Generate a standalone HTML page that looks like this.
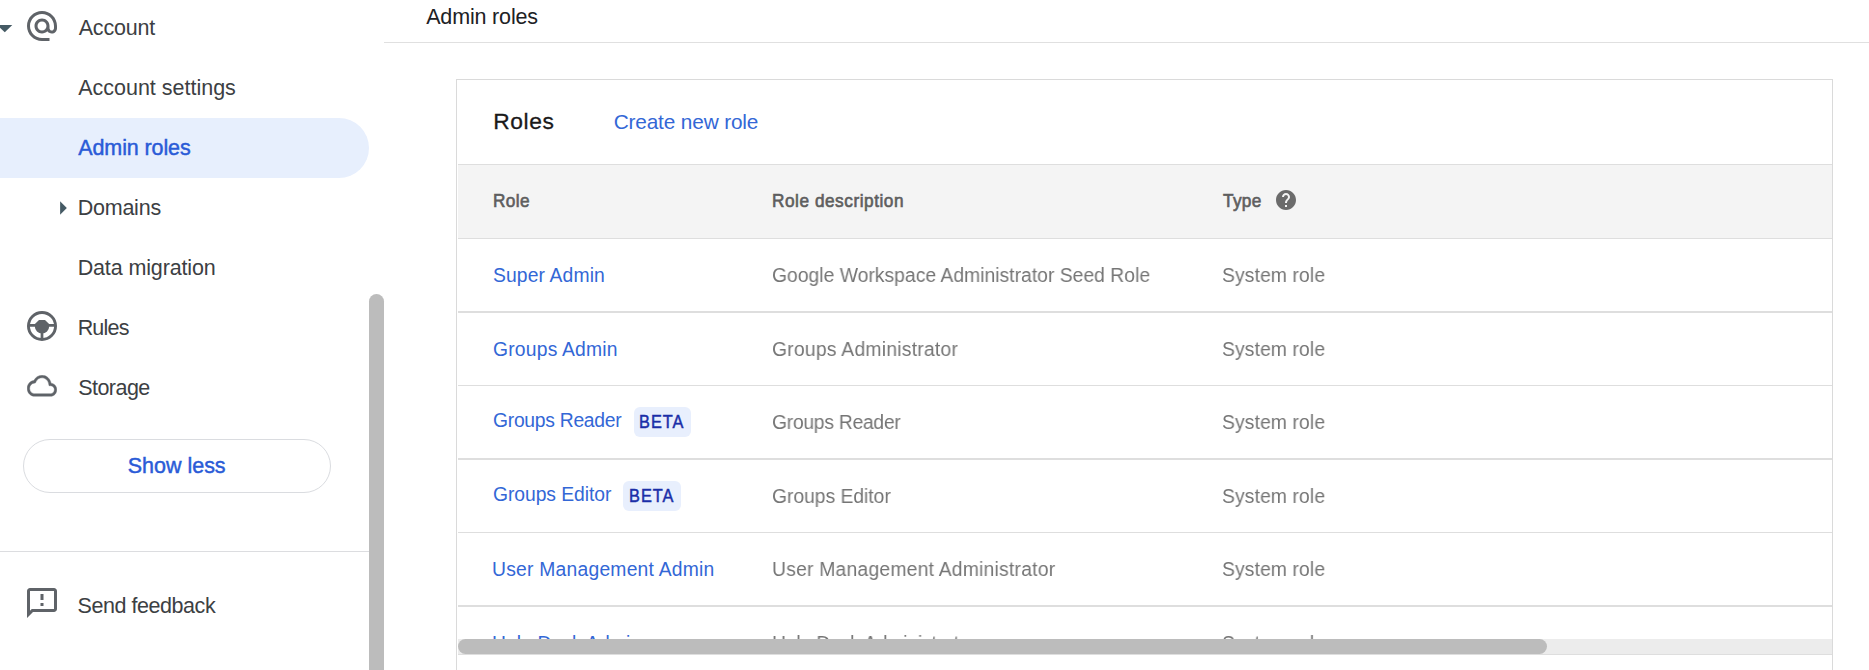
<!DOCTYPE html>
<html>
<head>
<meta charset="utf-8">
<title>Admin roles</title>
<style>
html,body{margin:0;padding:0;}
body{width:1869px;height:670px;overflow:hidden;background:#fff;position:relative;
  font-family:"Liberation Sans",sans-serif;color:#3c4043;}
.abs{position:absolute;}
.t{position:absolute;white-space:nowrap;line-height:1;transform-origin:0 50%;}
.nav{font-size:21.5px;color:#3c4043;}
.navact{font-size:21.5px;color:#2a5bd7;-webkit-text-stroke:0.45px #2a5bd7;}
.title{font-size:21.5px;color:#202124;}
.h2{font-size:22.8px;color:#1a1a1a;-webkit-text-stroke:0.3px #1a1a1a;}
.lnk{font-size:20.8px;color:#3367d6;}
.th{font-size:18.5px;color:#5e5e5e;-webkit-text-stroke:0.65px #5e5e5e;}
.td{font-size:20.0px;color:#757575;will-change:transform;}
.tdl{font-size:20.0px;color:#3367d6;}
.betat{font-size:18.5px;color:#1a2ea8;-webkit-text-stroke:0.5px #1a2ea8;}
.hl{left:0;top:118px;width:369px;height:60px;background:#e7effd;border-radius:0 30px 30px 0;}
.btn{left:23px;top:439px;width:306px;height:52px;border:1px solid #dadce0;border-radius:27px;}
.sdiv{left:0;top:551px;width:369px;height:1px;background:#dcdde0;}
.vsb{left:369px;top:294px;width:15px;height:400px;background:#bcbcbc;border-radius:7.5px 7.5px 0 0;}
.hdiv{left:384px;top:42px;width:1485px;height:1px;background:#e0e0e0;}
.card{left:456px;top:79px;width:1375px;height:700px;border:1px solid #dadada;box-sizing:content-box;}
.thbg{left:458px;top:165px;width:1374px;height:73px;background:#f4f4f4;}
.line{left:458px;width:1374px;background:#dedede;}
.beta{position:absolute;height:30px;background:#e8effd;border-radius:6px;}
.hsbt{left:458px;top:639px;width:1374px;height:15px;background:#ececec;border-bottom:1px solid #dedede;}
.hsb{left:458px;top:639px;width:1089px;height:15px;background:#bcbcbc;border-radius:7.5px;}
</style>
</head>
<body>

<!-- sidebar -->
<div class="abs hl"></div>

<svg class="abs" style="left:0;top:20px" width="16" height="16" viewBox="0 0 16 16"><path d="M-2.700 5.100 L12.300 5.100 L4.800 12.300 Z" fill="#455a64"/></svg>
<svg class="abs" style="left:24px;top:8px" width="36" height="36" viewBox="0 0 24 24"><path fill="#5f6368" d="M12 2C6.480 2 2 6.480 2 12s4.480 10 10 10h5v-2h-5c-4.340 0-8-3.660-8-8s3.660-8 8-8 8 3.660 8 8v1.430c0 .79-.71 1.570-1.500 1.570s-1.500-.78-1.500-1.570V12c0-2.760-2.240-5-5-5s-5 2.240-5 5 2.240 5 5 5c1.380 0 2.640-.56 3.540-1.470.65.89 1.770 1.470 2.960 1.470 1.970 0 3.500-1.600 3.500-3.570V12c0-5.520-4.480-10-10-10zm0 13c-1.660 0-3-1.340-3-3s1.340-3 3-3 3 1.340 3 3-1.340 3-3 3z"/></svg>

<svg class="abs" style="left:56px;top:198px" width="16" height="20" viewBox="0 0 16 20"><path d="M4.100 3.200 L10.800 10 L4.100 16.700 Z" fill="#455a64"/></svg>

<!-- rules icon -->
<svg class="abs" style="left:27px;top:311px" width="30" height="30" viewBox="0 0 30 30"><circle cx="15" cy="15" r="13.550" fill="none" stroke="#5f6368" stroke-width="2.900"/><path fill="#5f6368" d="M2 13.100 H7.900 L12 9.100 H18 L22.100 13.100 H28 V15.800 H22.100 A7.100 6.700 0 0 1 7.900 15.800 H2 Z"/><rect x="13.650" y="20" width="2.700" height="8" fill="#5f6368"/></svg>

<!-- cloud icon -->
<svg class="abs" style="left:27px;top:375px" width="30" height="21.500" viewBox="-0.150 3.850 24.300 16.300" preserveAspectRatio="none"><path fill="#5f6368" stroke="#5f6368" stroke-width="0.300" d="M12 6c2.620 0 4.880 1.860 5.390 4.430l.3 1.500 1.530.11c1.560.1 2.780 1.410 2.780 2.960 0 1.650-1.350 3-3 3H6c-2.210 0-4-1.790-4-4 0-2.050 1.530-3.760 3.560-3.970l1.070-.11.5-.95C8.080 7.140 9.940 6 12 6m0-2C9.110 4 6.600 5.640 5.350 8.040 2.340 8.360 0 10.910 0 14c0 3.310 2.690 6 6 6h13c2.760 0 5-2.240 5-5 0-2.640-2.050-4.780-4.650-4.960C18.670 6.590 15.640 4 12 4z"/></svg>

<div class="abs btn"></div>
<div class="abs sdiv"></div>

<!-- feedback icon -->
<svg class="abs" style="left:24px;top:585px" width="36" height="36" viewBox="0 0 24 24"><path fill="#5f6368" d="M20 2H4c-1.100 0-1.990.9-1.990 2L2 22l4-4h14c1.100 0 2-.9 2-2V4c0-1.100-.9-2-2-2zm0 14H5.170L4 17.170V4h16v12zm-9-4h2v2h-2zm0-6h2v4h-2z"/></svg>

<div class="abs vsb"></div>

<!-- main -->
<div class="abs hdiv"></div>
<div class="abs card"></div>

<div class="abs line" style="top:164px;height:1px"></div>
<div class="abs thbg"></div>
<div class="abs line" style="top:238px;height:1px"></div>
<svg class="abs" style="left:1273.800px;top:188px" width="24" height="24" viewBox="0 0 24 24"><path fill="#6b6b6b" d="M12 2C6.480 2 2 6.480 2 12s4.480 10 10 10 10-4.480 10-10S17.520 2 12 2zm1 17h-2v-2h2v2zm2.070-7.750l-.9.920C13.450 12.900 13 13.500 13 15h-2v-.5c0-1.100.45-2.100 1.170-2.830l1.240-1.260c.37-.36.590-.86.590-1.410 0-1.100-.9-2-2-2s-2 .9-2 2H8c0-2.210 1.790-4 4-4s4 1.790 4 4c0 .88-.36 1.680-.93 2.250z"/></svg>

<div class="abs line" style="top:311px;height:2px"></div>
<div class="abs line" style="top:385px;height:1px"></div>
<div class="abs line" style="top:458px;height:2px"></div>
<div class="abs line" style="top:532px;height:1px"></div>
<div class="abs line" style="top:605px;height:2px"></div>

<div class="beta" style="left:634px;top:407px;width:57px"></div>
<div class="beta" style="left:623px;top:481px;width:58px"></div>

<div class="t nav" id="n1" style="left:78.63px;top:18px;letter-spacing:-0.163px">Account</div>
<div class="t nav" id="n2" style="left:78.18px;top:78px;letter-spacing:-0.004px">Account settings</div>
<div class="t navact" id="n3" style="left:78.27px;top:138px;letter-spacing:-0.115px">Admin roles</div>
<div class="t nav" id="n4" style="left:77.64px;top:198px;letter-spacing:-0.213px">Domains</div>
<div class="t nav" id="n5" style="left:77.64px;top:258px;letter-spacing:-0.125px">Data migration</div>
<div class="t nav" id="n6" style="left:77.67px;top:318px;letter-spacing:-0.808px">Rules</div>
<div class="t nav" id="n7" style="left:78.16px;top:378px;letter-spacing:-0.526px">Storage</div>
<div class="t navact" id="n8" style="left:127.70px;top:456px;letter-spacing:-0.007px">Show less</div>
<div class="t nav" id="n9" style="left:77.51px;top:596px;letter-spacing:-0.443px">Send feedback</div>
<div class="t title" id="m1" style="left:426.16px;top:7px;letter-spacing:-0.161px">Admin roles</div>
<div class="t h2" id="m2" style="left:493.37px;top:110px;letter-spacing:0.535px">Roles</div>
<div class="t lnk" id="m3" style="left:613.64px;top:112px;letter-spacing:-0.145px">Create new role</div>
<div class="t th" id="h1" style="left:493.00px;top:192px;letter-spacing:0.403px;transform:scaleX(0.93)">Role</div>
<div class="t th" id="h2" style="left:772.00px;top:192px;letter-spacing:0.583px;transform:scaleX(0.93)">Role description</div>
<div class="t th" id="h3" style="left:1223.00px;top:192px;letter-spacing:0.360px;transform:scaleX(0.93)">Type</div>
<div class="t tdl" id="r1a" style="left:493.00px;top:265px;letter-spacing:0.139px;transform:scaleX(0.965)">Super Admin</div>
<div class="t td" id="r1b" style="left:772.00px;top:265px;letter-spacing:0.021px;transform:scaleX(0.965)">Google Workspace Administrator Seed Role</div>
<div class="t td" id="r1c" style="left:1222.00px;top:265px;letter-spacing:0.121px;transform:scaleX(0.965)">System role</div>
<div class="t tdl" id="r2a" style="left:493.00px;top:339px;letter-spacing:0.205px;transform:scaleX(0.965)">Groups Admin</div>
<div class="t td" id="r2b" style="left:772.00px;top:339px;letter-spacing:0.252px;transform:scaleX(0.965)">Groups Administrator</div>
<div class="t td" id="r2c" style="left:1222.00px;top:339px;letter-spacing:0.121px;transform:scaleX(0.965)">System role</div>
<div class="t tdl" id="r3a" style="left:493.00px;top:410px;letter-spacing:-0.284px;transform:scaleX(0.965)">Groups Reader</div>
<div class="t betat" id="b1" style="left:639.00px;top:413px;letter-spacing:1.179px;transform:scaleX(0.88)">BETA</div>
<div class="t td" id="r3b" style="left:772.00px;top:412px;letter-spacing:-0.276px;transform:scaleX(0.965)">Groups Reader</div>
<div class="t td" id="r3c" style="left:1222.00px;top:412px;letter-spacing:0.121px;transform:scaleX(0.965)">System role</div>
<div class="t tdl" id="r4a" style="left:493.00px;top:484px;letter-spacing:-0.065px;transform:scaleX(0.965)">Groups Editor</div>
<div class="t betat" id="b2" style="left:629.00px;top:487px;letter-spacing:1.197px;transform:scaleX(0.88)">BETA</div>
<div class="t td" id="r4b" style="left:772.00px;top:486px;letter-spacing:-0.028px;transform:scaleX(0.965)">Groups Editor</div>
<div class="t td" id="r4c" style="left:1222.00px;top:486px;letter-spacing:0.121px;transform:scaleX(0.965)">System role</div>
<div class="t tdl" id="r5a" style="left:492.00px;top:559px;letter-spacing:0.235px;transform:scaleX(0.965)">User Management Admin</div>
<div class="t td" id="r5b" style="left:772.00px;top:559px;letter-spacing:0.236px;transform:scaleX(0.965)">User Management Administrator</div>
<div class="t td" id="r5c" style="left:1222.00px;top:559px;letter-spacing:0.121px;transform:scaleX(0.965)">System role</div>
<div class="t tdl" id="r6a" style="left:492.00px;top:633px;letter-spacing:0.080px;transform:scaleX(0.965)">Help Desk Admin</div>
<div class="t td" id="r6b" style="left:772.00px;top:633px;letter-spacing:-0.146px;transform:scaleX(0.965)">Help Desk Administrator</div>
<div class="t td" id="r6c" style="left:1222.00px;top:633px;letter-spacing:0.121px;transform:scaleX(0.965)">System role</div>

<div class="abs hsbt"></div>
<div class="abs hsb"></div>
<div class="abs" style="left:458px;top:655px;width:1374px;height:15px;background:#fff"></div>

</body>
</html>
